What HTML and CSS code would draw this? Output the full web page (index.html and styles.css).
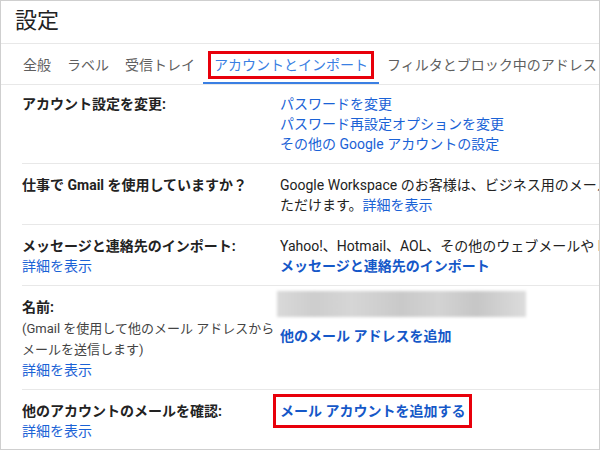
FILE: index.html
```html
<!DOCTYPE html>
<html lang="ja">
<head>
  <meta charset="UTF-8">
  <title>設定</title>
  <link rel="stylesheet" href="styles.css">
</head>
<body>

<div class="page">
  <h1 class="title">設定</h1>

  <div class="tabs">
    <div class="tab">全般</div>
    <div class="tab">ラベル</div>
    <div class="tab">受信トレイ</div>
    <div class="tab active"><span class="mark">アカウントとインポート</span></div>
    <div class="tab">フィルタとブロック中のアドレス</div>
  </div>

  <div class="settings">
    <div class="row">
      <div class="label"><b>アカウント設定を変更:</b></div>
      <div class="value">
        <div class="line"><a href="#">パスワードを変更</a></div>
        <div class="line"><a href="#">パスワード再設定オプションを変更</a></div>
        <div class="line"><a href="#">その他の Google アカウントの設定</a></div>
      </div>
    </div>

    <div class="row">
      <div class="label"><b>仕事で Gmail を使用していますか？</b></div>
      <div class="value">
        <div class="line">Google Workspace のお客様は、ビジネス用のメール アドレス、追加のストレージ、管理ツールをご利用い</div>
        <div class="line">ただけます。<a href="#">詳細を表示</a></div>
      </div>
    </div>

    <div class="row">
      <div class="label">
        <b>メッセージと連絡先のインポート:</b><br>
        <a href="#">詳細を表示</a>
      </div>
      <div class="value">
        <div class="line">Yahoo!、Hotmail、AOL、その他のウェブメールや POP3 アカウントからインポートします。</div>
        <div class="line"><a href="#" class="strong">メッセージと連絡先のインポート</a></div>
      </div>
    </div>

    <div class="row">
      <div class="label">
        <b>名前:</b>
        <div class="note">(Gmail を使用して他のメール アドレスから<br>メールを送信します)</div>
        <a href="#">詳細を表示</a>
      </div>
      <div class="value name-value">
        <div class="blurred"></div>
        <div class="line"><a href="#" class="strong">他のメール アドレスを追加</a></div>
      </div>
    </div>

    <div class="row">
      <div class="label">
        <b>他のアカウントのメールを確認:</b><br>
        <a href="#">詳細を表示</a>
      </div>
      <div class="value">
        <div class="line"><a href="#" class="strong mark">メール アカウントを追加する</a></div>
      </div>
    </div>
  </div>
</div>

</body>
</html>
```

FILE: styles.css
```css
body { margin: 0; font-family: Roboto, "Noto Sans CJK JP", sans-serif; color: #222; }
a { color: #1a62d6; text-decoration: none; }
a.strong { font-weight: 700; color: #1558c8; }
b { font-weight: 700; }

.page {
  width: 600px; height: 450px; box-sizing: border-box;
  border: 1px solid #cfcfcf; overflow: hidden;
}

.title {
  margin: 0; height: 43px; box-sizing: border-box;
  padding: 5px 0 0 14px; font-size: 22px; font-weight: 400; line-height: 30px;
  border-bottom: 1px solid #e8e8e8;
}

.tabs {
  display: flex; height: 40px; padding-left: 14px;
  border-bottom: 1px solid #e8e8e8; white-space: nowrap;
}
.tab {
  display: flex; align-items: center; box-sizing: border-box;
  padding: 4px 8px 0; font-size: 14px; line-height: 20px; color: #5f5f5f;
  border-bottom: 2px solid transparent;
}
.tab.active { padding: 4px 11px 0; color: #3a7fe3; border-bottom-color: #3a7fe3; }
.tab .mark { display: inline-block; line-height: 16px; }

.mark { outline: 3px solid #e8000b; outline-offset: 3px; }

.settings { margin-left: 21px; }
.row {
  display: grid; grid-template-columns: 258px 1fr;
  padding: 11px 0 9px; border-bottom: 1px solid #e8e8e8;
  font-size: 14px; line-height: 20px;
}
.row:first-child { padding-top: 9px; }
.row:last-child { border-bottom: none; }

.label { color: #222; white-space: nowrap; }
.note { margin-top: 1px; font-size: 13px; line-height: 21px; color: #444; }

.line { white-space: nowrap; }
.value .mark { display: inline-block; outline-offset: 4px; }

.name-value { margin-top: -6px; }
.blurred {
  width: 249px; height: 26px; margin: 0 0 9px -3px;
  background: linear-gradient(90deg, #d9d9d9, #cdcdcd 15%, #d6d6d6 30%, #c9c9c9 50%, #d3d3d3 65%, #c6c6c6 80%, #dcdcdc);
  filter: blur(1.5px);
}
```
